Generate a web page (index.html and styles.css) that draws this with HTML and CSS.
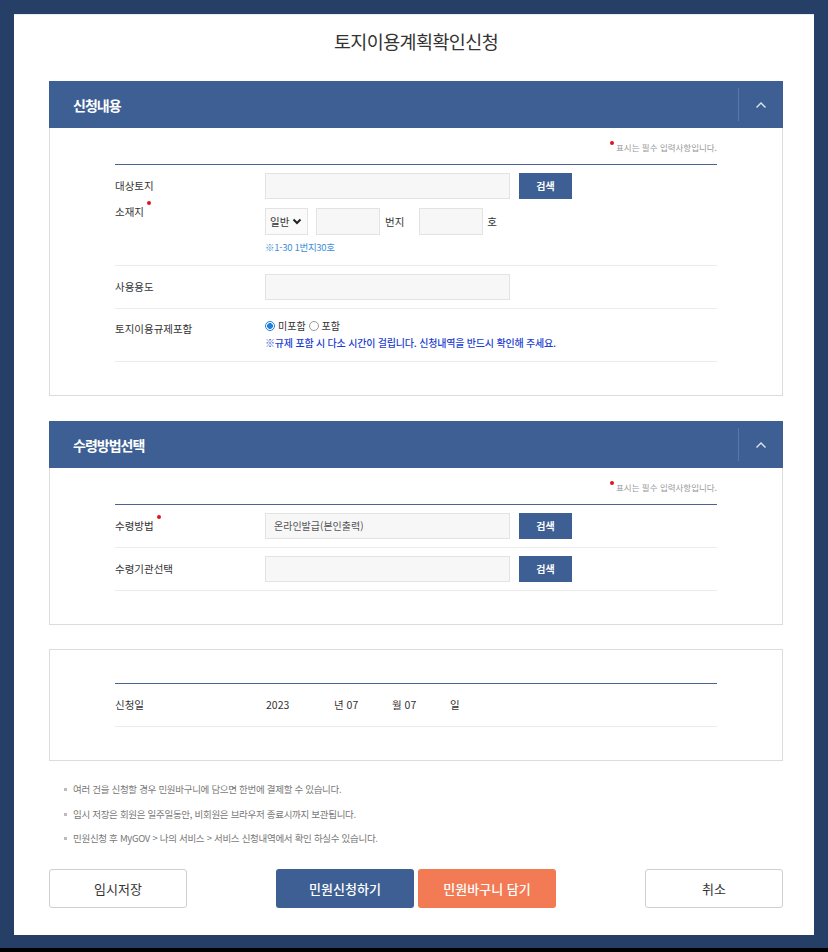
FILE: index.html
```html
<!DOCTYPE html>
<html lang="ko">

<head>
    <meta charset="UTF-8" />
    <meta name="viewport" content="width=device-width, initial-scale=1.0" />
    <title>토지이용계획확인신청</title>
    <link rel="stylesheet" href="styles.css">
</head>

<body>
    <div class="screen">
        <div class="panel">
            <!-- 제목 -->
            <h1 class="title">토지이용계획확인신청</h1>

            <!-- 신청내용 -->
            <div class="sec">
                <div class="sec-head">
                    <span class="sec-name">신청내용</span>
                    <span class="sec-toggle">
                        <svg width="12" height="8" viewBox="0 0 12 8"><polyline points="1.5,6.5 6,2 10.5,6.5" fill="none" stroke="#dfe6f1" stroke-width="1.4" /></svg>
                    </span>
                </div>
                <div class="sec-body">
                    <div class="req-note"><span class="dot"></span> 표시는 필수 입력사항입니다.</div>
                    <div class="table">
                        <div class="row row-addr">
                            <div class="label">
                                <div class="l1">대상토지</div>
                                <div class="l2">소재지<span class="dot sup"></span></div>
                            </div>
                            <div class="field">
                                <div class="line">
                                    <span class="input wide"></span>
                                    <span class="btn-search">검색</span>
                                </div>
                                <div class="line line2">
                                    <span class="select">일반
                                        <svg width="10" height="7" viewBox="0 0 10 7"><polyline points="1.5,1.5 5,5 8.5,1.5" fill="none" stroke="#222" stroke-width="2" /></svg>
                                    </span>
                                    <span class="input small"></span>
                                    <span class="unit">번지</span>
                                    <span class="input small"></span>
                                    <span class="unit">호</span>
                                </div>
                                <div class="hint">※1-30 1번지30호</div>
                            </div>
                        </div>
                        <div class="row">
                            <div class="label">사용용도</div>
                            <div class="field">
                                <span class="input wide"></span>
                            </div>
                        </div>
                        <div class="row row-radio">
                            <div class="label">토지이용규제포함</div>
                            <div class="field">
                                <div class="radios">
                                    <span class="radio on"></span> 미포함
                                    <span class="radio"></span> 포함
                                </div>
                                <div class="warn">※규제 포함 시 다소 시간이 걸립니다. 신청내역을 반드시 확인해 주세요.</div>
                            </div>
                        </div>
                    </div>
                </div>
            </div>

            <!-- 수령방법선택 -->
            <div class="sec">
                <div class="sec-head">
                    <span class="sec-name">수령방법선택</span>
                    <span class="sec-toggle">
                        <svg width="12" height="8" viewBox="0 0 12 8"><polyline points="1.5,6.5 6,2 10.5,6.5" fill="none" stroke="#dfe6f1" stroke-width="1.4" /></svg>
                    </span>
                </div>
                <div class="sec-body">
                    <div class="req-note"><span class="dot"></span> 표시는 필수 입력사항입니다.</div>
                    <div class="table">
                        <div class="row">
                            <div class="label">수령방법<span class="dot sup"></span></div>
                            <div class="field line">
                                <span class="input wide">온라인발급(본인출력)</span>
                                <span class="btn-search">검색</span>
                            </div>
                        </div>
                        <div class="row">
                            <div class="label">수령기관선택</div>
                            <div class="field line">
                                <span class="input wide"></span>
                                <span class="btn-search">검색</span>
                            </div>
                        </div>
                    </div>
                </div>
            </div>

            <!-- 신청일 -->
            <div class="sec sec-date">
                <div class="sec-body boxed">
                    <div class="table">
                        <div class="row">
                            <div class="label">신청일</div>
                            <div class="field date">
                                <span class="d-year">2023</span>
                                <span class="d-part">년 07</span>
                                <span class="d-part">월 07</span>
                                <span>일</span>
                            </div>
                        </div>
                    </div>
                </div>
            </div>

            <!-- 안내 -->
            <ul class="notes">
                <li>여러 건을 신청할 경우 민원바구니에 담으면 한번에 결제할 수 있습니다.</li>
                <li>임시 저장은 회원은 일주일동안, 비회원은 브라우저 종료시까지 보관됩니다.</li>
                <li>민원신청 후 MyGOV &gt; 나의 서비스 &gt; 서비스 신청내역에서 확인 하실수 있습니다.</li>
            </ul>

            <!-- 버튼 -->
            <div class="actions">
                <a class="btn btn-line">임시저장</a>
                <div class="btn-group">
                    <a class="btn btn-blue">민원신청하기</a>
                    <a class="btn btn-orange">민원바구니 담기</a>
                </div>
                <a class="btn btn-line">취소</a>
            </div>
        </div>
    </div>
</body>

</html>
```

FILE: styles.css
```css
/* 전체 */
html {
    background: #000;
}

body {
    margin: 0;
    font-family: "Noto Sans CJK KR", "Noto Sans", sans-serif;
    color: #333;
}

.screen {
    height: 948px;
    background: #263f66;
    padding: 14px;
    box-sizing: border-box;
}

.panel {
    width: 800px;
    height: 921px;
    background: #fff;
    padding: 0 31px 0 35px;
    box-sizing: border-box;
    border-top: 1px solid #e6ebf2;
}

/* 제목 */
.title {
    margin: 0;
    height: 66px;
    line-height: 52px;
    text-align: center;
    font-size: 18.5px;
    font-weight: normal;
    letter-spacing: -0.6px;
    color: #333;
}

/* 섹션 */
.sec {
    width: 734px;
    margin-bottom: 25px;
}

.sec-date {
    margin-top: -1px;
    margin-bottom: 0;
}

.sec-head {
    height: 47px;
    background: #3d5f94;
    display: flex;
    align-items: center;
    justify-content: space-between;
}

.sec-name {
    padding-left: 24px;
    color: #fff;
    font-size: 14px;
    font-weight: bold;
    letter-spacing: -1px;
}

.sec-toggle {
    width: 44px;
    height: 33px;
    border-left: 1px solid #5877a6;
    display: flex;
    align-items: center;
    justify-content: center;
}

.sec-body {
    border: 1px solid #dcdcdc;
    border-top: none;
    padding: 0 65px 33px;
}

.sec-body.boxed {
    border-top: 1px solid #dcdcdc;
    padding-top: 33px;
}

.req-note {
    padding-top: 12px;
    height: 24px;
    line-height: 14px;
    text-align: right;
    font-size: 8.5px;
    color: #999;
}

.dot {
    display: inline-block;
    width: 4px;
    height: 4px;
    border-radius: 50%;
    background: #e0141e;
    vertical-align: 6px;
}

.dot.sup {
    position: relative;
    top: -10px;
    margin-left: 3px;
    vertical-align: middle;
}

/* 표 */
.table {
    border-top: 1px solid #4a6395;
}

.row {
    display: grid;
    grid-template-columns: 150px 1fr;
    border-bottom: 1px solid #ececec;
    padding: 8px 0 8px;
}

.label {
    font-size: 10.5px;
    line-height: 26px;
    height: 26px;
    color: #333;
}

.row-addr .label {
    height: auto;
}

.label .l1 {
    line-height: 25px;
}

.label .l2 {
    line-height: 27px;
}

.field {
    display: flex;
    flex-direction: column;
    align-items: flex-start;
    font-size: 10.5px;
}

.field.line,
.line {
    display: flex;
    flex-direction: row;
    align-items: center;
}

.line2 {
    margin-top: 9px;
}

.input {
    display: block;
    height: 26px;
    line-height: 24px;
    background: #f7f7f7;
    border: 1px solid #e3e3e3;
    box-sizing: border-box;
    padding-left: 8px;
    font-size: 10px;
    color: #555;
}

.input.wide {
    width: 245px;
}

.input.small {
    width: 64px;
    height: 27px;
}

.btn-search {
    width: 53px;
    height: 26px;
    line-height: 26px;
    margin-left: 9px;
    background: #3d5f94;
    color: #fff;
    font-size: 10px;
    font-weight: bold;
    text-align: center;
}

.select {
    width: 43px;
    height: 27px;
    box-sizing: border-box;
    border: 1px solid #e3e3e3;
    background: #fafafa;
    display: flex;
    align-items: center;
    padding-left: 4px;
    gap: 3px;
    font-size: 10.5px;
    margin-right: 8px;
}

.unit {
    margin: 0 15px 0 5px;
    font-size: 10.5px;
}

.unit:last-child {
    margin-left: 4px;
}

.hint {
    margin-top: 6px;
    font-size: 9.5px;
    line-height: 12px;
    color: #3d8fd6;
    letter-spacing: -0.3px;
}

.row-addr {
    padding-bottom: 12px;
}

.row-radio {
    padding: 10px 0 10px;
}

.row-radio .label {
    line-height: 20px;
    height: auto;
}

.radios {
    line-height: 14px;
    font-size: 10px;
    display: flex;
    align-items: center;
    gap: 3px;
}

.radio {
    display: inline-block;
    width: 8px;
    height: 8px;
    border-radius: 50%;
    border: 1px solid #999;
    background: #fff;
}

.radio.on {
    border-color: #1e7fe0;
    background: radial-gradient(circle, #1e7fe0 0 2.6px, #fff 3.2px);
}

.warn {
    margin-top: 1px;
    line-height: 17px;
    font-size: 10px;
    font-weight: 500;
    color: #1d3fd1;
    letter-spacing: -0.2px;
}

/* 날짜 */
.date {
    display: flex;
    flex-direction: row;
    line-height: 26px;
}

.d-year {
    width: 68px;
    padding-left: 1px;
}

.d-part {
    width: 58px;
}

/* 안내 문구 */
.notes {
    list-style: none;
    margin: 16px 0 0;
    padding: 0 0 0 24px;
    font-size: 9.5px;
    color: #777;
    letter-spacing: -0.3px;
}

.notes li {
    position: relative;
    line-height: 24.5px;
}

.notes li::before {
    content: "";
    position: absolute;
    left: -9px;
    top: 11px;
    width: 3px;
    height: 3px;
    background: #bbb;
}

/* 하단 버튼 */
.actions {
    width: 734px;
    margin-top: 18px;
    display: flex;
    justify-content: space-between;
}

.btn-group {
    display: flex;
    gap: 4px;
}

.btn {
    width: 138px;
    height: 39px;
    line-height: 39px;
    box-sizing: border-box;
    border-radius: 3px;
    text-align: center;
    font-size: 13px;
    text-decoration: none;
}

.btn-line {
    border: 1px solid #cfcfcf;
    color: #333;
    line-height: 37px;
}

.btn-blue {
    background: #3d5f94;
    color: #fff;
    font-weight: 500;
}

.btn-orange {
    background: #f27a54;
    color: #fff;
    font-weight: 500;
}
```
